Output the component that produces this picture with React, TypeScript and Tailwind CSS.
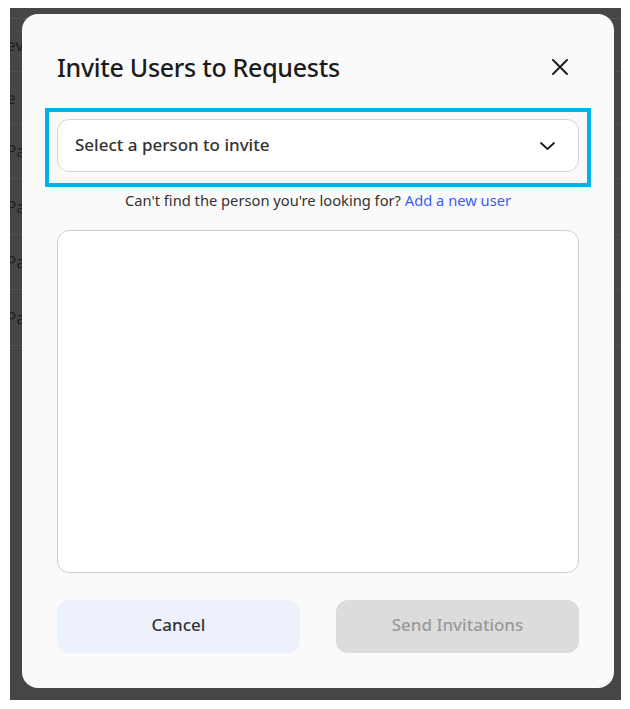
import React from "react";

const rows = [
  { h: 53, t: "ev" },
  { h: 52, t: "e" },
  { h: 55, t: "Pa" },
  { h: 56, t: "Pa" },
  { h: 55, t: "Pa" },
  { h: 56, t: "Pa" },
];

export default function App() {
  return (
    <div
      className="w-[630px] h-[709px] bg-white pt-[8px] pl-[10px]"
      style={{ fontFamily: '"Noto Sans", "Open Sans", sans-serif' }}
    >
      <div className="relative w-[611px] h-[692px] bg-[#464646] overflow-hidden">
        {/* dimmed underlying page */}
        <div className="flex flex-col">
          <div className="h-[11px] border-b border-[#555555]" />
          {rows.map((r, i) => (
            <div
              key={i}
              className="flex items-center border-b border-[#525252] text-[17px] text-[#1e1e1e]"
              style={{ height: r.h }}
            >
              <span className="ml-[-4px]">{r.t}</span>
            </div>
          ))}
        </div>

        {/* modal */}
        <div className="absolute left-[12px] top-[6px] w-[592px] h-[674px] bg-[#fafafa] rounded-[16px] px-[35px] pb-[35px] flex flex-col">
          <div className="mt-[37px] h-[32px] flex items-center justify-between">
            <h1 className="text-[25px] leading-[32px] font-medium text-[#1c1c1c] tracking-[-0.3px]">
              Invite Users to Requests
            </h1>
            <button className="mr-[11px] w-[16px] h-[16px] flex items-center justify-center">
              <svg width="16" height="16" viewBox="0 0 16 16" fill="none">
                <path d="M1 1L15 15M15 1L1 15" stroke="#1c1c1c" strokeWidth="1.9" strokeLinecap="round" />
              </svg>
            </button>
          </div>

          <div className="mt-[25px] -mx-3 border-4 border-[#00b0f0] px-[8px] pt-[7px] pb-[11px]">
            <div className="h-[53px] bg-white border border-[#d2d2d2] rounded-[12px] flex items-center justify-between pl-[17px] pr-[23px]">
              <span className="text-[17px] leading-[24px] font-medium text-[#333333] mt-[-2px]">Select a person to invite</span>
              <svg width="15" height="8" viewBox="0 0 15 8" fill="none">
                <path d="M1 1L7.5 7L14 1" stroke="#1c1c1c" strokeWidth="1.8" strokeLinecap="round" strokeLinejoin="round" />
              </svg>
            </div>
          </div>

          <p className="mt-[3px] h-[20px] leading-[20px] text-center text-[14.7px] text-[#333333]">
            Can't find the person you're looking for?{" "}
            <a className="text-[#3a5cf5]">Add a new user</a>
          </p>

          <div className="mt-[20px] h-[343px] bg-white border border-[#cfcfcf] rounded-[12px]" />

          <div className="mt-[27px] flex gap-[36px]">
            <button className="flex-1 h-[53px] rounded-[12px] bg-[#edf1fb] text-[17px] font-medium text-[#333333] pb-[3px]">
              Cancel
            </button>
            <button className="flex-1 h-[53px] rounded-[12px] bg-[#dcdcdc] text-[17px] font-medium text-[#9a9a9a] pb-[3px]">
              Send Invitations
            </button>
          </div>
        </div>
      </div>
    </div>
  );
}
